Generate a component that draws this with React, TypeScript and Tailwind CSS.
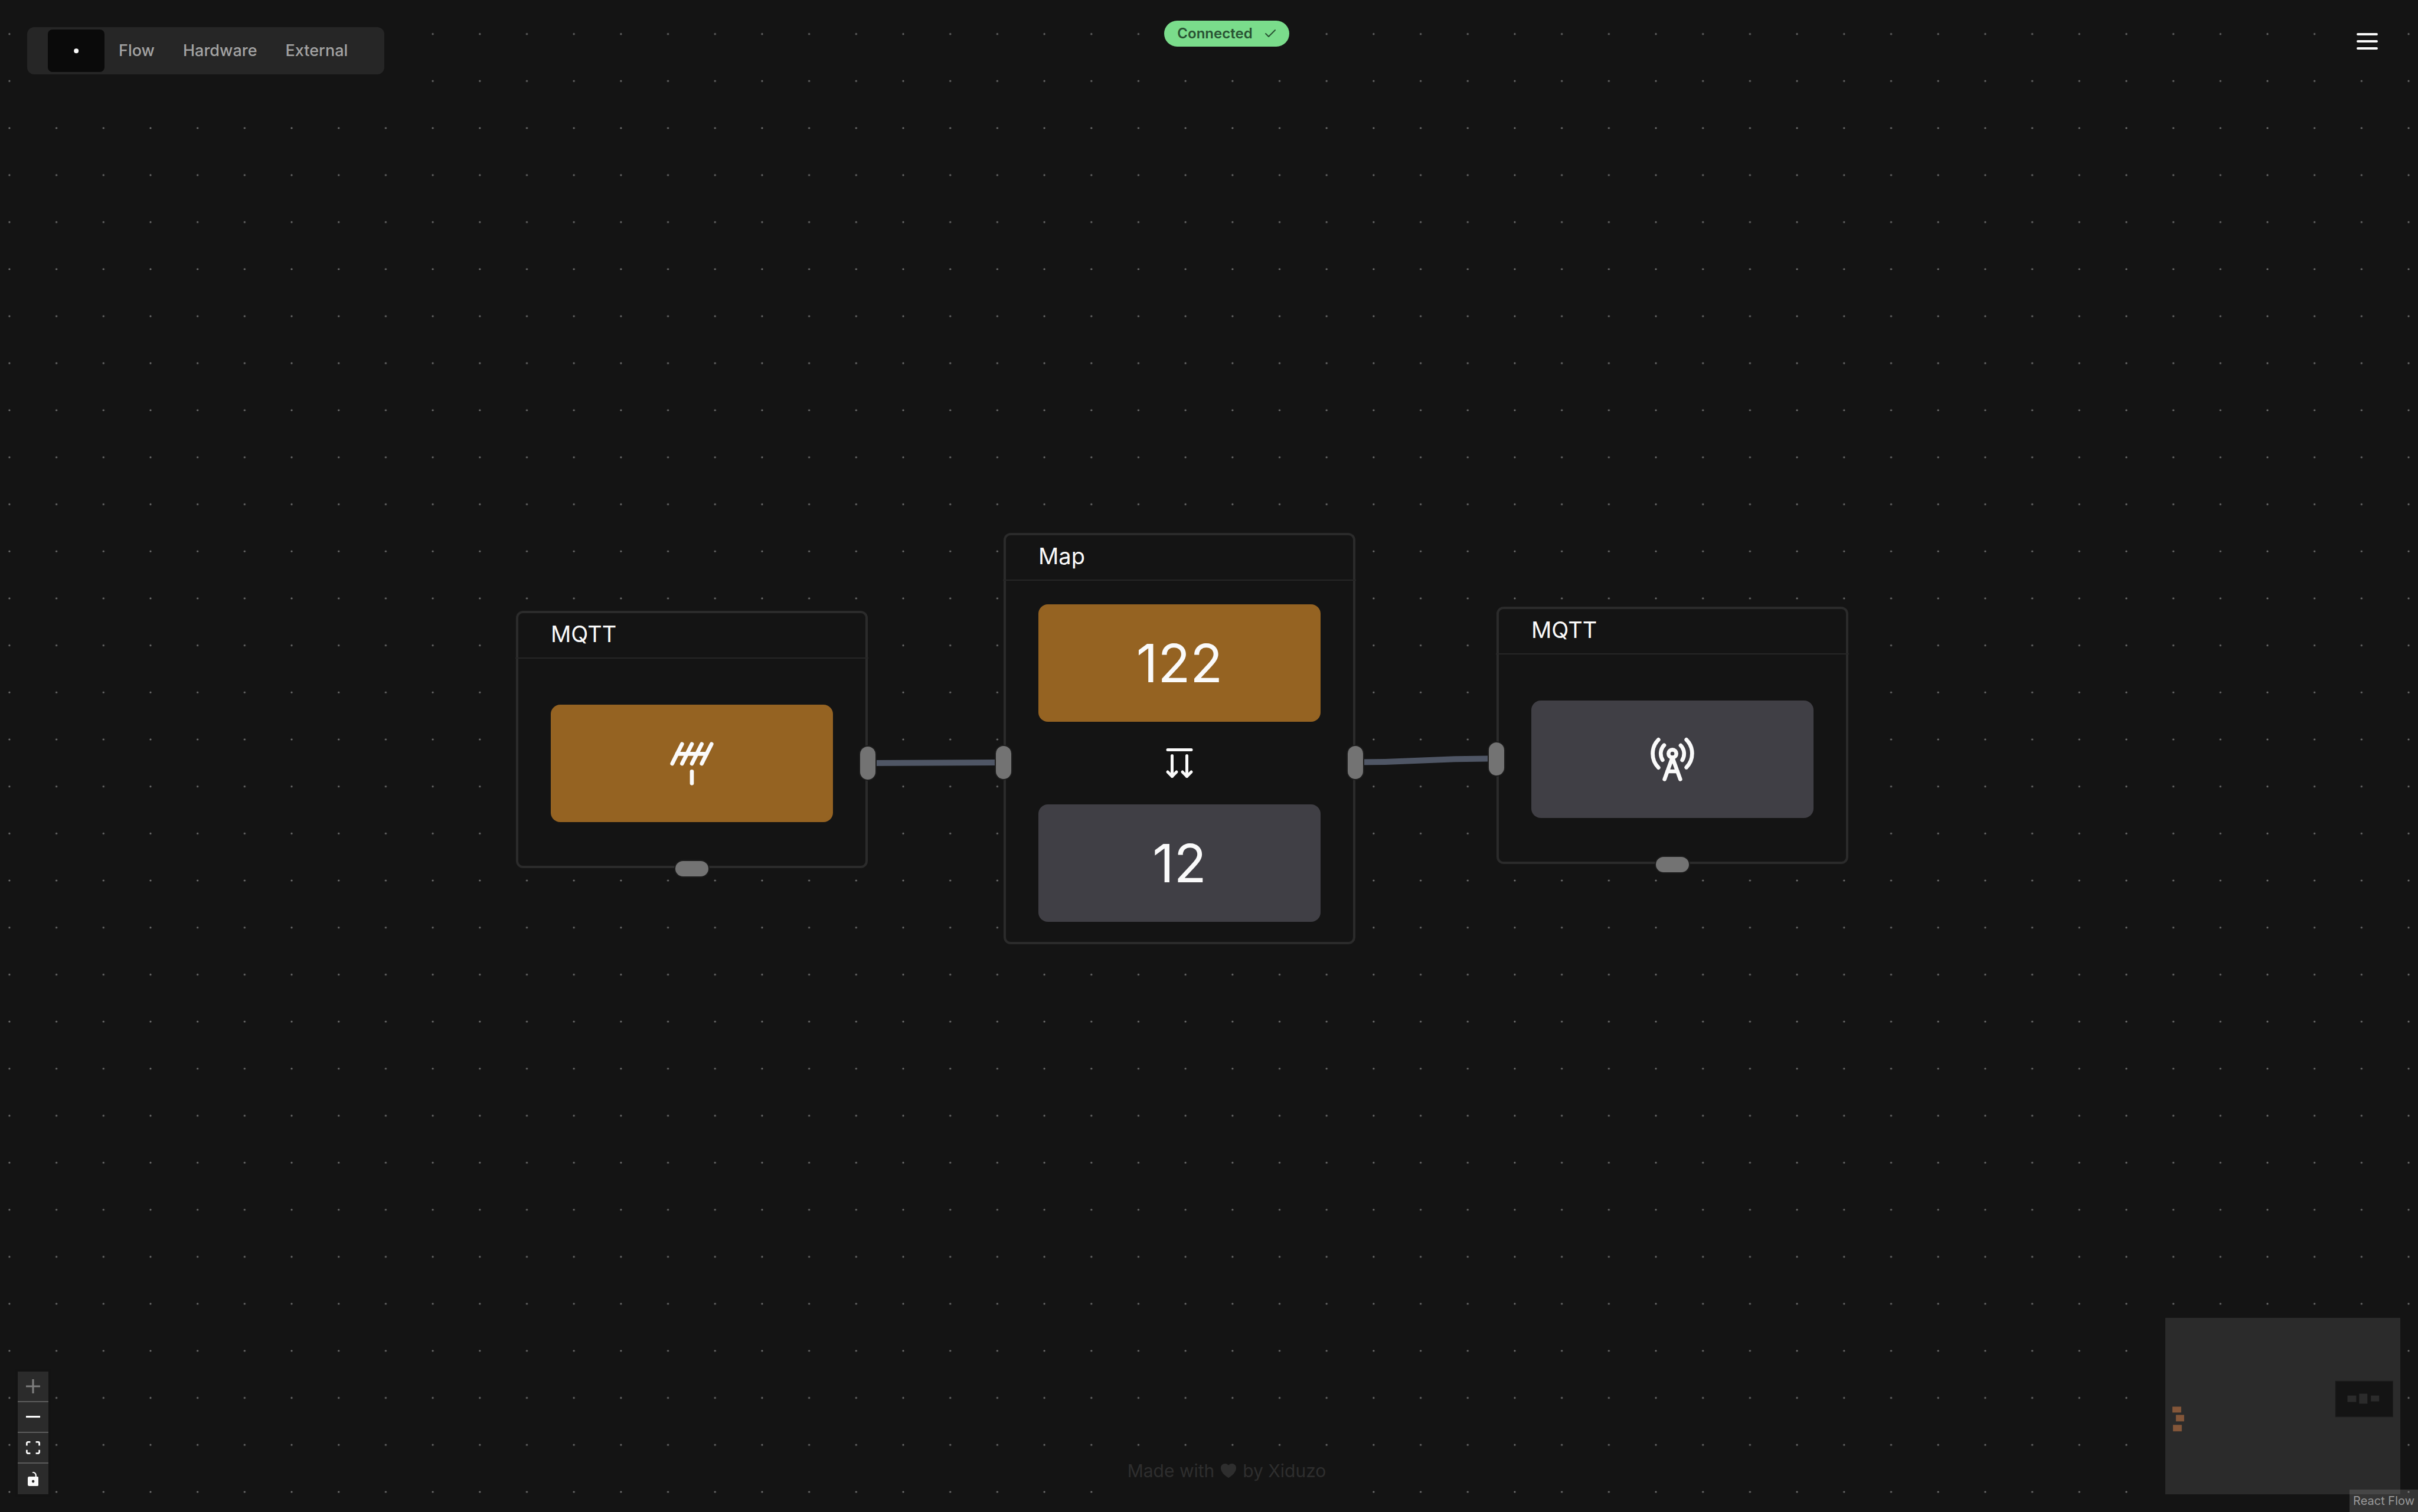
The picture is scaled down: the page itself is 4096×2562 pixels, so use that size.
import type { ReactNode } from "react";
import { Antenna, ArrowsUpFromLine, Check, Dot, RadioTower } from "lucide-react";
import { HiHeart } from "react-icons/hi2";

function Canvas() {
  return (
    <svg
      className="absolute inset-0 size-full"
      viewBox="0 0 4112 2572"
      preserveAspectRatio="xMinYMin slice"
      aria-hidden="true"
    >
      <defs>
        <pattern id="dots" x="6" y="7.8" width="80" height="80" patternUnits="userSpaceOnUse">
          <circle cx="10" cy="50" r="1.6" fill="#737373" />
        </pattern>
      </defs>
      <rect width="4112" height="2572" fill="url(#dots)" />
      <g fill="none" stroke="#4f5665" strokeWidth="10">
        <path d="M1478 1298C1585 1298 1585 1297 1692 1297" />
        <path d="M2306 1296.5C2418 1296.5 2418 1290.5 2530 1290.5" />
      </g>
    </svg>
  );
}

type Side = "left" | "right" | "bottom";

function Handle({ side }: { side: Side }) {
  const place = {
    left: "-left-[19px] top-[calc(50%+40px)] h-[60px] w-[30px] -translate-y-1/2",
    right: "-right-[19px] top-[calc(50%+40px)] h-[60px] w-[30px] -translate-y-1/2",
    bottom: "-bottom-5 left-1/2 h-[30px] w-[60px] -translate-x-1/2",
  }[side];
  return <span className={`absolute rounded-full border-2 border-[#1c1c1c] bg-[#737373] bg-clip-border ${place}`} />;
}

function FlowNode({
  title,
  place,
  body,
  handles,
  children,
}: {
  title: string;
  place: string;
  body: string;
  handles: Side[];
  children: ReactNode;
}) {
  return (
    <article className={`absolute w-[596px] rounded-xl border-4 border-[#2b2b2b] bg-[#141414] ${place}`}>
      <header className="-mx-[5px] flex h-[77px] items-center border-b-2 border-[#262626] px-[60px] pb-[6px]">
        <h2 className="text-[38px] leading-[48px]">{title}</h2>
      </header>
      <div className={`flex flex-col items-center px-[55px] ${body}`}>{children}</div>
      {handles.map((side) => (
        <Handle key={side} side={side} />
      ))}
    </article>
  );
}

function Block({ tone, children }: { tone: "amber" | "zinc"; children: ReactNode }) {
  const color = tone === "amber" ? "bg-[#956322]" : "bg-[#403f45]";
  return (
    <div
      className={`flex h-[199px] w-full items-center justify-center rounded-2xl text-[90px] leading-none ${color}`}
    >
      {children}
    </div>
  );
}

function Menubar() {
  return (
    <div className="bg-[#141414] p-4">
      <nav className="flex h-20 items-center rounded-xl bg-[#262626] pr-[38px] pl-[35px] text-[27px] font-medium text-[#a3a3a3]">
        <button aria-label="Home" className="flex h-[72px] items-center rounded-lg bg-[#0a0a0a] px-6 text-[#fafafa]">
          <Dot size={48} />
        </button>
        {["Flow", "Hardware", "External"].map((label) => (
          <button key={label} className="h-[72px] px-6">
            {label}
          </button>
        ))}
      </nav>
    </div>
  );
}

const controls = [
  {
    label: "Zoom in",
    box: "0 0 32 32",
    size: "size-6",
    color: "fill-[#7d7d7d]",
    d: "M32 18.133H18.133V32h-4.266V18.133H0v-4.266h13.867V0h4.266v13.867H32z",
  },
  { label: "Zoom out", box: "0 0 32 5", size: "w-6", color: "fill-[#fafafa]", d: "M0 0h32v4.2H0z" },
  {
    label: "Fit view",
    box: "0 0 32 30",
    size: "w-6",
    color: "fill-[#fafafa]",
    d: "M3.692 4.63c0-.53.4-.938.939-.938h5.215V0H4.708C2.13 0 0 2.054 0 4.63v5.216h3.692V4.631zM27.354 0h-5.2v3.692h5.17c.53 0 .984.4.984.939v5.215H32V4.631A4.624 4.624 0 0027.354 0zm.954 24.83c0 .532-.4.94-.939.94h-5.215v3.768h5.215c2.577 0 4.631-2.13 4.631-4.707v-5.139h-3.692v5.139zm-23.677.94c-.531 0-.939-.4-.939-.94v-5.138H0v5.139c0 2.577 2.13 4.707 4.708 4.707h5.138V25.77H4.631z",
  },
  {
    label: "Lock",
    box: "0 0 25 32",
    size: "h-6",
    color: "fill-[#fafafa]",
    d: "M21.333 10.667H19.81V7.619C19.81 3.429 16.38 0 12.19 0c-4.114 1.828-1.37 2.133.305 2.438 1.676.305 4.42 2.59 4.42 5.181v3.048H3.047A3.056 3.056 0 000 13.714v15.238A3.056 3.056 0 003.048 32h18.285a3.056 3.056 0 003.048-3.048V13.714a3.056 3.056 0 00-3.048-3.047zM12.19 24.533a3.056 3.056 0 01-3.047-3.047 3.056 3.056 0 013.047-3.048 3.056 3.056 0 013.048 3.048 3.056 3.056 0 01-3.048 3.047z",
  },
];

function Controls() {
  return (
    <div className="flex w-[52px] flex-col divide-y-2 divide-[#5b5b5b] bg-[#2b2b2b] shadow-[0_0_4px_2px_rgba(0,0,0,0.08)]">
      {controls.map((c) => (
        <button key={c.label} aria-label={c.label} className="flex h-[52px] items-center justify-center">
          <svg viewBox={c.box} className={`${c.size} ${c.color}`}>
            <path d={c.d} />
          </svg>
        </button>
      ))}
    </div>
  );
}

function MiniMap() {
  return (
    <svg viewBox="0 0 400 300" className="h-[299px] w-[398px] bg-[#2b2b2b]" role="img" aria-label="Mini map">
      <rect x="289.5" y="107.5" width="98" height="61" fill="#141414" stroke="#202020" />
      <g fill="#2b2b2b">
        <rect x="310" y="132" width="15" height="11" />
        <rect x="330" y="129" width="14" height="17" />
        <rect x="350" y="132" width="14" height="10" />
      </g>
      <g fill="#835639">
        <rect x="12" y="151" width="15" height="10" />
        <rect x="18" y="165" width="14" height="11" />
        <rect x="13" y="182" width="15" height="11" />
      </g>
    </svg>
  );
}

export default function App() {
  return (
    <main className="relative h-screen overflow-hidden bg-[#141414] font-['Inter',sans-serif] text-[#fafafa]">
      <Canvas />

      <FlowNode title="MQTT" place="left-[874px] top-[1035px]" body="pt-[78px] pb-[74px]" handles={["right", "bottom"]}>
        <Block tone="amber">
          <Antenna size={80} />
        </Block>
      </FlowNode>
      <FlowNode title="Map" place="left-[1700px] top-[903px]" body="pt-10 pb-[34px]" handles={["left", "right"]}>
        <Block tone="amber">122</Block>
        <div className="flex h-[140px] items-center">
          <ArrowsUpFromLine size={60} className="rotate-180" />
        </div>
        <Block tone="zinc">12</Block>
      </FlowNode>
      <FlowNode title="MQTT" place="left-[2535px] top-[1028px]" body="pt-[78px] pb-[74px]" handles={["left", "bottom"]}>
        <Block tone="zinc">
          <RadioTower size={80} />
        </Block>
      </FlowNode>

      <div className="relative flex h-full flex-col justify-between px-[30px]">
        <header className="grid grid-cols-3 items-start">
          <div className="flex pt-[30px]">
            <Menubar />
          </div>
          <div className="flex justify-center pt-[35px] pl-[60px]">
            <div
              role="status"
              className="flex h-11 items-center gap-[18px] rounded-full bg-[#7adc8b] pr-5 pl-[22px] text-[24px] font-semibold text-[#295233]"
            >
              Connected
              <Check size={24} />
            </div>
          </div>
          <div className="flex justify-end pt-[30px]">
            <button aria-label="Menu" className="flex h-20 w-28 items-center justify-center bg-[#141414]">
              <svg
                viewBox="0 0 24 24"
                className="size-12"
                fill="none"
                stroke="currentColor"
                strokeWidth="2"
                strokeLinecap="round"
              >
                <path d="M4 6h16M4 12h16M4 18h16" />
              </svg>
            </button>
          </div>
        </header>

        <footer className="grid grid-cols-3 items-end pb-[30px]">
          <Controls />
          <div className="flex justify-center pl-[60px]">
            <p className="flex items-center gap-2 bg-[#141414] p-4 text-[30px] leading-[48px] text-[#2e2e2e]">
              Made with
              <HiHeart size={32} />
              by Xiduzo
            </p>
          </div>
          <div className="flex justify-end">
            <MiniMap />
          </div>
        </footer>
      </div>

      <a
        href="https://reactflow.dev"
        className="absolute right-0 bottom-0 bg-[#969696]/25 px-[6px] py-1 text-[20px] leading-[30px] text-[#999999]"
      >
        React Flow
      </a>
    </main>
  );
}
